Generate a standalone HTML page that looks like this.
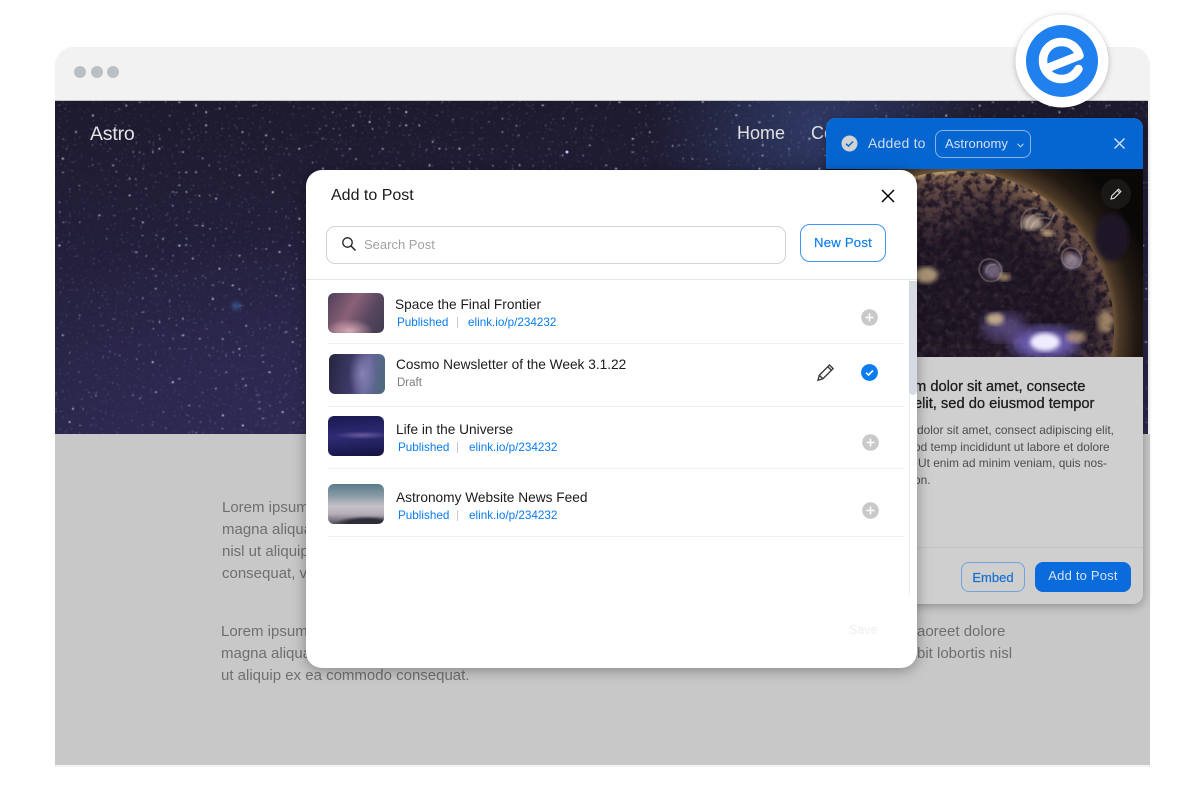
<!DOCTYPE html>
<html lang="en">
<head>
<meta charset="utf-8">
<title>Add to Post</title>
<style>
*{box-sizing:border-box;margin:0;padding:0}
html,body{width:1200px;height:800px;overflow:hidden;background:#fff;font-family:"Liberation Sans",sans-serif}
.a{position:absolute;white-space:nowrap}
#win{position:absolute;left:55px;top:47px;width:1095px;height:718px;border-radius:18px 18px 0 0;background:#f2f2f2;overflow:hidden}
#strip{position:absolute;left:55px;top:765px;width:1095px;height:2px;background:#f3f3f3}
.dot{position:absolute;top:66px;width:12px;height:12px;border-radius:50%;background:#b9bfc3}
#hero{position:absolute;left:55px;top:100px;width:1093px;height:334px;border-top:1px solid #c4c4c4;overflow:hidden;
background:
radial-gradient(ellipse 170px 130px at 70% 8%,#2f3a66 0,transparent 100%),
radial-gradient(ellipse 420px 200px at 25% 100%,#2f2a55 0,transparent 100%),
linear-gradient(180deg,#1d1a2e 0,#25213f 60%,#2a2648 100%)}
#below{position:absolute;left:55px;top:434px;width:1095px;height:331px;background:#c8c8c8}
.lorem{position:absolute;font-size:15px;line-height:22px;color:#6f6f6f;white-space:nowrap}
#panel{position:absolute;left:826px;top:118px;width:317px;height:486px;border-radius:10px;overflow:hidden;background:#cfcfcf;box-shadow:0 2px 10px rgba(0,0,0,.3)}
#phead{position:absolute;left:0;top:0;width:317px;height:51px;background:#0566d2}
#sun{position:absolute;left:0;top:51px;width:317px;height:188px;background:#0a0806;overflow:hidden}
#modal{position:absolute;left:306px;top:170px;width:611px;height:498px;background:#fff;border-radius:16px;box-shadow:0 2px 14px rgba(0,0,0,.35);overflow:hidden}
.thumb{position:absolute;width:56px;height:40px;border-radius:6px}
.t{position:absolute;font-size:13.7px;color:#1c1c1c;white-space:nowrap}
.s{position:absolute;font-size:11.7px;color:#0a7cf0;white-space:nowrap}
.sep{position:absolute;width:1px;height:11px;background:#c8c8c8}
.hr{position:absolute;height:1px;background:#f0f0f0}
.plus{position:absolute;width:17px;height:17px}
</style>
</head>
<body>
<div id="win"></div>
<div id="strip"></div>
<div class="dot" style="left:74px"></div>
<div class="dot" style="left:91px"></div>
<div class="dot" style="left:107px"></div>

<div id="hero">
  <svg width="1093" height="334" style="position:absolute;left:0;top:0">
    <defs>
      <filter id="st1" x="0" y="0" width="100%" height="100%" color-interpolation-filters="sRGB">
        <feTurbulence type="fractalNoise" baseFrequency=".3" numOctaves="1" seed="11"/>
        <feColorMatrix values="0 0 0 0 .86  0 0 0 0 .9  0 0 0 0 1  10 0 0 0 -7.100"/>
        <feGaussianBlur stdDeviation=".4"/>
      </filter>
      <filter id="st2" x="0" y="0" width="100%" height="100%" color-interpolation-filters="sRGB">
        <feTurbulence type="fractalNoise" baseFrequency=".42" numOctaves="1" seed="4"/>
        <feColorMatrix values="0 0 0 0 .55  0 0 0 0 .62  0 0 0 0 .85  8 0 0 0 -5.300"/>
        <feGaussianBlur stdDeviation=".45"/>
      </filter>
    </defs>
    <rect width="1093" height="334" filter="url(#st2)" opacity=".4"/>
    <rect width="1093" height="334" filter="url(#st1)" opacity=".9"/>
    <circle cx="181" cy="205" r="4" fill="#4b83c9" opacity=".5" style="filter:blur(2px)"/>
    <circle cx="512" cy="51" r="1.500" fill="#cdbcff"/>
  </svg>
</div>
<div class="a" style="left:90px;top:123px;font-size:19.500px;color:#e2e2e2;letter-spacing:-.2px">Astro</div>
<div class="a" style="left:737px;top:123px;font-size:18px;color:#e0e0e0">Home</div>
<div class="a" style="left:811px;top:123px;font-size:18px;color:#e0e0e0">Co</div>

<div id="below"></div>
<div class="lorem" style="left:222px;top:497px">Lorem ipsum dolor sit amet<br>magna aliquam erat volutpat<br>nisl ut aliquip ex ea commodo<br>consequat, vel illum dolore</div>
<div class="lorem" style="left:221px;top:621px">Lorem ipsum dolor sit amet<br>magna aliquam erat volutpat<br>ut aliquip ex ea commodo consequat.</div>
<div class="lorem" style="left:917px;top:621px">aoreet dolore</div>
<div class="lorem" style="left:917px;top:643px">bit lobortis nisl</div>

<div id="panel">
  <div id="phead">
    <svg class="a" style="left:15px;top:17px" width="17" height="17" viewBox="0 0 17 17"><circle cx="8.500" cy="8.500" r="8" fill="#d3d3d3"/><path d="M5 8.700l2.500 2.400 4.500-4.600" fill="none" stroke="#0566d2" stroke-width="1.500"/></svg>
    <div class="a" style="left:42px;top:17px;font-size:14px;color:#d0dbe8;letter-spacing:.2px">Added to</div>
    <div class="a" style="left:109px;top:12px;width:96px;height:28px;border:1px solid #8db3e2;border-radius:8px"></div>
    <div class="a" style="left:119px;top:18px;font-size:13px;color:#d5e0ee;letter-spacing:.1px">Astronomy</div>
    <svg class="a" style="left:190px;top:24px" width="9" height="7" viewBox="0 0 9 7"><path d="M1.500 1.800l3 3 3-3" fill="none" stroke="#d5e0ee" stroke-width="1"/></svg>
    <svg class="a" style="left:287px;top:19px" width="13" height="13" viewBox="0 0 13 13"><path d="M1.500 1.500l10 10M11.500 1.500l-10 10" stroke="#dbe6f3" stroke-width="1.300"/></svg>
  </div>
  <div id="sun">
    <svg width="317" height="188" viewBox="0 0 317 188" style="position:absolute;left:0;top:0">
      <defs>
        <radialGradient id="cor" gradientUnits="userSpaceOnUse" cx="130" cy="160" r="205">
          <stop offset=".76" stop-color="#7a5e3e"/>
          <stop offset=".8" stop-color="#4a3826"/>
          <stop offset=".88" stop-color="#211912"/>
          <stop offset="1" stop-color="#0a0806"/>
        </radialGradient>
        <radialGradient id="disc" gradientUnits="userSpaceOnUse" cx="130" cy="175" r="172">
          <stop offset="0" stop-color="#342736"/>
          <stop offset=".65" stop-color="#3b2c36"/>
          <stop offset=".86" stop-color="#55403f"/>
          <stop offset=".97" stop-color="#75594a"/>
          <stop offset="1" stop-color="#b8986c"/>
        </radialGradient>
        <clipPath id="dc"><circle cx="130" cy="160" r="158"/></clipPath>
        <filter id="mot" x="0" y="0" width="100%" height="100%" color-interpolation-filters="sRGB">
          <feTurbulence type="fractalNoise" baseFrequency=".13" numOctaves="3" seed="8"/>
          <feColorMatrix values="0 0 0 0 .1  0 0 0 0 .07  0 0 0 0 .13  4 0 0 0 -1.600"/>
        </filter>
        <filter id="mot2" x="0" y="0" width="100%" height="100%" color-interpolation-filters="sRGB">
          <feTurbulence type="fractalNoise" baseFrequency=".16" numOctaves="2" seed="21"/>
          <feColorMatrix values="0 0 0 0 .55  0 0 0 0 .43  0 0 0 0 .5  3 0 0 0 -1.500"/>
        </filter>
        <filter id="b1"><feGaussianBlur stdDeviation=".6"/></filter>
        <filter id="b2"><feGaussianBlur stdDeviation="2.500"/></filter>
        <filter id="b5"><feGaussianBlur stdDeviation="6"/></filter>
        <filter id="b12"><feGaussianBlur stdDeviation="12"/></filter>
      </defs>
      <rect width="317" height="188" fill="url(#cor)"/>
      <ellipse cx="286" cy="68" rx="17" ry="24" fill="#1a1226" filter="url(#b2)"/>
      <circle cx="130" cy="160" r="158" fill="url(#disc)"/>
      <g clip-path="url(#dc)">
        <path d="M165 30 L205 70 L255 100 L285 170 L200 188 L90 188 L60 90 L130 60z" fill="#1c1420" opacity=".8" filter="url(#b12)"/>
        <rect width="317" height="188" filter="url(#mot)" opacity=".85"/>
        <rect width="317" height="188" filter="url(#mot2)" opacity=".2"/>
        <ellipse cx="219" cy="174" rx="34" ry="16" fill="#7d6cd0" opacity=".8" filter="url(#b5)"/>
        <ellipse cx="219" cy="173" rx="15" ry="9" fill="#f0ecff" filter="url(#b2)"/>
        <ellipse cx="178" cy="158" rx="22" ry="14" fill="#7a68b4" opacity=".55" filter="url(#b5)"/>
        <ellipse cx="169" cy="150" rx="9" ry="6" fill="#e8cf9a" opacity=".75" filter="url(#b2)"/>
        <ellipse cx="279" cy="153" rx="8" ry="11" fill="#e0bf8a" opacity=".55" filter="url(#b2)"/>
        <ellipse cx="250" cy="168" rx="10" ry="6" fill="#d8b67e" opacity=".6" filter="url(#b2)"/>
        <g fill="none" stroke="#d8c8c0" stroke-width="1" opacity=".55" filter="url(#b1)">
          <path d="M196 60c-4-14 6-24 16-20M200 60c0-10 8-18 18-14M205 60c2-8 10-14 20-10M214 62c6-4 12-8 14-18"/>
          <path d="M238 95c-6-8 0-18 8-16 8 1 12 10 8 16-4 5-12 6-16 0zM232 82c2-6 6-10 8-12"/>
          <path d="M156 108c-6-8-2-18 8-18 10 1 14 10 10 18-4 6-14 6-18 0zM160 104c0-6 4-10 10-8"/>
        </g>
        <ellipse cx="206" cy="54" rx="10" ry="7" fill="#efdcc0" opacity=".6" filter="url(#b2)"/>
        <ellipse cx="222" cy="64" rx="7" ry="3" fill="#f2d79e" opacity=".8" filter="url(#b2)"/>
        <ellipse cx="246" cy="92" rx="9" ry="8" fill="#d8cbe0" opacity=".5" filter="url(#b2)"/>
        <ellipse cx="167" cy="102" rx="9" ry="8" fill="#b9a6c8" opacity=".5" filter="url(#b2)"/>
        <ellipse cx="178" cy="108" rx="6" ry="4" fill="#e8c88c" opacity=".6" filter="url(#b2)"/>
        <ellipse cx="100" cy="106" rx="12" ry="8" fill="#f0d4a0" opacity=".65" filter="url(#b2)"/>
      </g>
    </svg>
    <div class="a" style="left:275px;top:10px;width:30px;height:30px;border-radius:50%;background:#1a1816"></div>
    <svg class="a" style="left:283px;top:18px" width="14" height="14" viewBox="0 0 14 14"><path d="M2 12l.8-3.200 6.700-6.700 2.400 2.400-6.700 6.700zM8.300 3.300l2.400 2.400" fill="none" stroke="#ddd" stroke-width="1.100"/></svg>
  </div>
  <div class="a" style="left:88px;top:261px;font-size:14.700px;line-height:17px;color:#1d1d1d;-webkit-text-stroke:.3px #1d1d1d">m dolor sit amet, consecte<br>elit, sed do eiusmod tempor</div>
  <div class="a" style="left:91px;top:304px;font-size:11.900px;line-height:16.700px;color:#4d4d4d">dolor sit amet, consect adipiscing elit,<br><span style="margin-left:-3px">od temp incididunt ut labore et dolore</span><br><span style="margin-left:1px">Ut enim ad minim veniam, quis nos-</span><br><span style="margin-left:-3px">on.</span></div>
  <div class="a" style="left:0;top:429px;width:317px;height:1px;background:#c2c2c2"></div>
  <div class="a" style="left:135px;top:444px;width:64px;height:30px;border:1px solid #6ea5e0;border-radius:8px;text-align:center;font-size:13px;line-height:29px;color:#1770d3;-webkit-text-stroke:.2px #1770d3">Embed</div>
  <div class="a" style="left:209px;top:444px;width:96px;height:30px;background:#0a6bdc;border-radius:8px;text-align:center;font-size:13px;line-height:28px;color:#d5e2f2;letter-spacing:.2px">Add to Post</div>
</div>

<div id="modal">
  <div class="a" style="left:25px;top:17px;font-size:16px;color:#1a1a1a">Add to Post</div>
  <svg class="a" style="left:575px;top:19px" width="14" height="14" viewBox="0 0 14 14"><path d="M1 1l12 12M13 1L1 13" stroke="#000" stroke-width="1.500"/></svg>
  <div class="a" style="left:20px;top:56px;width:460px;height:38px;border:1px solid #d4d4d4;border-radius:9px"></div>
  <svg class="a" style="left:35px;top:66px" width="16" height="16" viewBox="0 0 16 16"><circle cx="6.500" cy="6.500" r="4.700" fill="none" stroke="#222" stroke-width="1.300"/><path d="M10 10l4.500 4.500" stroke="#222" stroke-width="1.500"/></svg>
  <div class="a" style="left:58px;top:67px;font-size:13px;color:#a3a3a3">Search Post</div>
  <div class="a" style="left:494px;top:54px;width:86px;height:38px;border:1px solid #3d97f5;border-radius:10px;text-align:center;font-size:13.200px;line-height:35px;color:#0a7cf0;letter-spacing:.2px;-webkit-text-stroke:.15px #0a7cf0">New Post</div>
  <div class="a" style="left:0;top:109px;width:611px;height:1px;background:#e6e6e6"></div>

  <div class="thumb" style="left:22px;top:123px;background:radial-gradient(ellipse 24px 12px at 38% 95%,#d8a9b4,transparent),linear-gradient(120deg,#4f3f58 0,#8a6177 40%,#5a4860 68%,#3f3a4e 100%)"></div>
  <div class="t" style="left:89px;top:127px">Space the Final Frontier</div>
  <div class="s" style="left:91px;top:146px">Published</div><div class="sep" style="left:151px;top:147px"></div><div class="s" style="left:162px;top:146px">elink.io/p/234232</div>
  <svg class="plus" style="left:555px;top:139px" viewBox="0 0 17 17"><circle cx="8.500" cy="8.500" r="8.300" fill="#c9c9c9"/><path d="M8.500 4.500v8M4.500 8.500h8" stroke="#fff" stroke-width="1.500"/></svg>
  <div class="hr" style="left:22px;top:173px;width:576px"></div>

  <div class="thumb" style="left:23px;top:184px;background:radial-gradient(ellipse 14px 26px at 60% 50%,#8781b4,transparent),linear-gradient(100deg,#25243f 0,#3f3d6c 45%,#64649a 65%,#4b6a78 100%)"></div>
  <div class="t" style="left:90px;top:187px">Cosmo Newsletter of the Week 3.1.22</div>
  <div class="a" style="left:91px;top:207px;font-size:11.500px;color:#7e7e7e">Draft</div>
  <svg class="a" style="left:510px;top:193px" width="19" height="19" viewBox="0 0 19 19"><path d="M2 17.200l1.300-5L13.500 2l3.600 3.600L6.900 15.800zM3.300 12.200l3.600 3.600M11.800 3.700l3.600 3.600" fill="none" stroke="#3c3c3c" stroke-width="1.400"/></svg>
  <svg class="plus" style="left:555px;top:194px" viewBox="0 0 17 17"><circle cx="8.500" cy="8.500" r="8.400" fill="#0a7cf0"/><path d="M5 8.700l2.500 2.300 4.500-4.500" fill="none" stroke="#fff" stroke-width="1.600"/></svg>
  <div class="hr" style="left:22px;top:236px;width:576px"></div>

  <div class="thumb" style="left:22px;top:246px;background:radial-gradient(ellipse 28px 4px at 60% 48%,#6a5a9a,transparent),linear-gradient(175deg,#1a1850 0,#2e2b75 50%,#14133f 100%)"></div>
  <div class="t" style="left:90px;top:252px">Life in the Universe</div>
  <div class="s" style="left:92px;top:271px">Published</div><div class="sep" style="left:151px;top:272px"></div><div class="s" style="left:163px;top:271px">elink.io/p/234232</div>
  <svg class="plus" style="left:556px;top:264px" viewBox="0 0 17 17"><circle cx="8.500" cy="8.500" r="8.300" fill="#c9c9c9"/><path d="M8.500 4.500v8M4.500 8.500h8" stroke="#fff" stroke-width="1.500"/></svg>
  <div class="hr" style="left:22px;top:298px;width:576px"></div>

  <div class="thumb" style="left:22px;top:314px;background:radial-gradient(ellipse 34px 8px at 70% 100%,#2e2e3a 60%,transparent),linear-gradient(180deg,#587b8c 0,#8b9ba7 30%,#c4c0c8 55%,#b5aeb8 75%,#55525e 100%)"></div>
  <div class="t" style="left:90px;top:320px">Astronomy Website News Feed</div>
  <div class="s" style="left:92px;top:339px">Published</div><div class="sep" style="left:151px;top:340px"></div><div class="s" style="left:163px;top:339px">elink.io/p/234232</div>
  <svg class="plus" style="left:556px;top:332px" viewBox="0 0 17 17"><circle cx="8.500" cy="8.500" r="8.300" fill="#c9c9c9"/><path d="M8.500 4.500v8M4.500 8.500h8" stroke="#fff" stroke-width="1.500"/></svg>
  <div class="hr" style="left:22px;top:366px;width:576px"></div>

  <div class="a" style="left:603px;top:110px;width:1px;height:315px;background:#eee"></div>
  <div class="a" style="left:603px;top:111px;width:8px;height:114px;background:#d8dae3;border-radius:0 0 4px 4px"></div>
  <div class="a" style="left:543px;top:453px;font-size:12.500px;color:#efefef">Save</div>
</div>

<svg class="a" style="left:1010px;top:9px;overflow:visible" width="104" height="104" viewBox="0 0 104 104">
  <circle cx="52" cy="52" r="46.500" fill="#fff" style="filter:drop-shadow(0 1px 3px rgba(0,0,0,.25))"/>
  <circle cx="52" cy="52" r="36" fill="#1f80ee"/>
  <path d="M39 58.500L69.500 46.500C67 38 60 33 51.500 33C41 33 33 41 33 51.500C33 62 41 70 51.500 70C59 70 64.500 66.500 68.500 60" fill="none" stroke="#fff" stroke-width="8.500" stroke-linecap="round" stroke-linejoin="round"/>
</svg>
</body>
</html>
